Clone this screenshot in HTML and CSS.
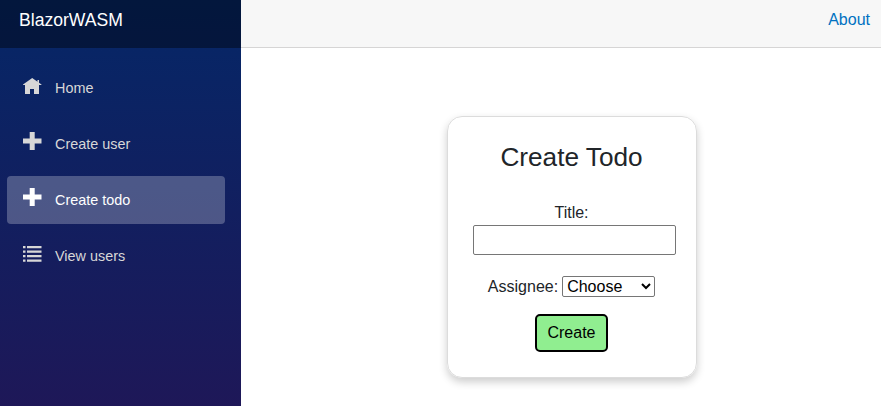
FILE: index.html
```html
<!DOCTYPE html>
<html lang="en">
<head>
<meta charset="utf-8">
<title>BlazorWASM</title>
<link rel="stylesheet" href="styles.css">
</head>
<body>
<div class="page">
  <aside class="sidebar">
    <div class="brand"><a href="#">BlazorWASM</a></div>
    <nav class="nav">
      <a class="nav-link" href="#"><svg class="icon" viewBox="0 0 19 20"><path d="M9.200 2 0 8.500V9h2v9h5v-5h4v5h5V9h2.500v-.5L16 6.800V4h-1.500v1.700z"/></svg>Home</a>
      <a class="nav-link" href="#"><svg class="icon" viewBox="0 0 19 20"><path d="M6.700 0h5v6.500h6.800v5h-6.800V18h-5v-6.500H0v-5h6.700z"/></svg>Create user</a>
      <a class="nav-link active" href="#"><svg class="icon" viewBox="0 0 19 20"><path d="M6.700 0h5v6.500h6.800v5h-6.800V18h-5v-6.500H0v-5h6.700z"/></svg>Create todo</a>
      <a class="nav-link" href="#"><svg class="icon" viewBox="0 0 19 20"><path d="M0 2h2.500v2.300H0zM4 2h14.500v2.300H4zM0 6.400h2.500v2.300H0zM4 6.400h14.500v2.300H4zM0 11h2.500v2.300H0zM4 11h14.500v2.300H4zM0 15.400h2.500v2.300H0zM4 15.400h14.500v2.300H4z"/></svg>View users</a>
    </nav>
  </aside>
  <main class="main">
    <header class="top-row"><a href="#">About</a></header>
    <section class="content">
      <form class="card">
        <h3>Create Todo</h3>
        <label class="title-label" for="title">Title:</label>
        <input id="title" class="title-input" type="text">
        <div class="assignee">
          <label for="assignee">Assignee:</label>
          <select id="assignee"><option>Choose</option></select>
        </div>
        <button type="button" class="create">Create</button>
      </form>
    </section>
  </main>
</div>
</body>
</html>
```
FILE: styles.css
```css
* { box-sizing: border-box; }
body {
  margin: 0;
  font: 16px/24px "Liberation Sans", Arial, sans-serif;
  color: #212529;
  background: #fff;
}
a { text-decoration: none; }
.page { display: flex; height: 100vh; overflow: hidden; }
.sidebar {
  width: 241px;
  flex: none;
  background: linear-gradient(180deg, #052767 0, #3a0647 864px);
}
.brand {
  height: 48px;
  padding: 5px 0 0 19px;
  background: rgba(0, 0, 0, .4);
  font-size: 17.6px;
  line-height: 30px;
}
.brand a { color: #fff; }
.nav { display: flex; flex-direction: column; gap: 8px; padding: 16px 16px 0 7px; }
.nav-link {
  display: flex;
  align-items: center;
  height: 48px;
  padding-left: 16px;
  border-radius: 4px;
  color: #d7d7d7;
  font-size: 14.4px;
}
.icon { width: 19px; height: 20px; margin: -4px 13px 0 0; fill: currentColor; }
.nav-link.active { background: rgba(255, 255, 255, .25); color: #fff; }
.main { flex: 1; min-width: 0; }
.top-row {
  display: flex;
  justify-content: flex-end;
  height: 48px;
  padding: 8px 11px 0 0;
  background: #f7f7f7;
  border-bottom: 1px solid #d6d5d5;
}
.top-row a { color: #0071c1; }
.content { display: flex; padding: 68px 0 0 206px; }
.card {
  display: flex;
  flex-direction: column;
  align-items: center;
  width: 250px;
  height: 262px;
  padding: 23px 21px 0 20px;
  border: 1px solid #dcdcdc;
  border-radius: 15px;
  box-shadow: 0 4px 8px rgba(0, 0, 0, .2);
}
h3 { margin: 0; font-size: 26.2px; font-weight: 400; line-height: 34px; }
.title-label { margin-top: 27px; }
.title-input {
  width: 203px;
  height: 30px;
  margin: 0 0 0 6px;
  flex: none;
  border: 1px solid #767676;
  border-radius: 2px;
  font: inherit;
}
.assignee { display: flex; align-items: center; gap: 4px; margin-top: 20px; }
select {
  width: 93px;
  height: 21px;
  margin-bottom: 1px;
  padding: 0;
  border: 1px solid #767676;
  border-radius: 2px;
  background: #fff;
  color: #000;
  font: 16px "Liberation Sans", Arial, sans-serif;
}
.create {
  width: 73px;
  height: 38px;
  margin-top: 15px;
  padding: 0;
  border: 2px solid #000;
  border-radius: 5px;
  background: #90ee90;
  color: #000;
  font: 16px "Liberation Sans", Arial, sans-serif;
}
```
